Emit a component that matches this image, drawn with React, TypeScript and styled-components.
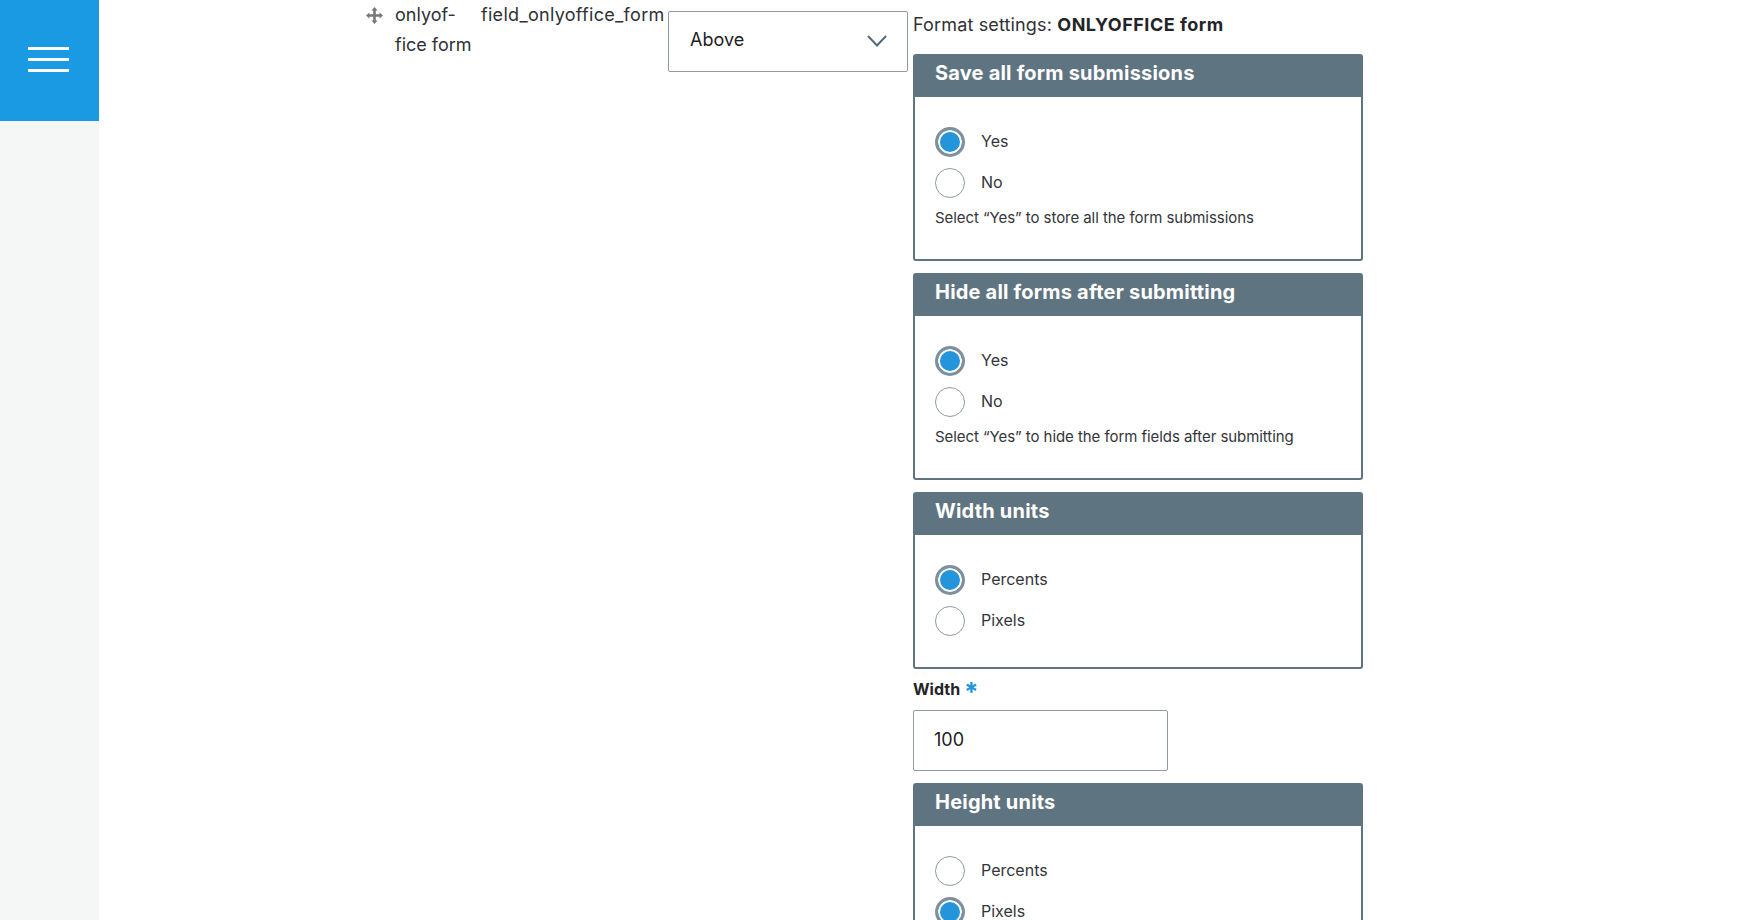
import React from "react";
import styled, { createGlobalStyle } from "styled-components";

const GlobalStyle = createGlobalStyle`
  html, body {
    margin: 0;
    height: 100%;
    overflow: hidden;
    background: #fff;
  }
  body {
    font-family: "Inter", "Liberation Sans", sans-serif;
    color: #232429;
  }
`;

const groups = [
  {
    title: "Save all form submissions",
    options: [
      { label: "Yes", checked: true },
      { label: "No", checked: false },
    ],
    hint: "Select “Yes” to store all the form submissions",
  },
  {
    title: "Hide all forms after submitting",
    options: [
      { label: "Yes", checked: true },
      { label: "No", checked: false },
    ],
    hint: "Select “Yes” to hide the form fields after submitting",
  },
  {
    title: "Width units",
    options: [
      { label: "Percents", checked: true },
      { label: "Pixels", checked: false },
    ],
  },
];

type Option = { label: string; checked: boolean };
type GroupProps = { title: string; options: Option[]; hint?: string };

const RadioGroup: React.FC<GroupProps> = ({ title, options, hint }) => (
  <Card>
    <CardHeader>{title}</CardHeader>
    <CardBody>
      {options.map(({ label, checked }) => (
        <RadioRow key={label}>
          <Radio $checked={checked} />
          <RadioLabel>{label}</RadioLabel>
        </RadioRow>
      ))}
      {hint && <Hint>{hint}</Hint>}
    </CardBody>
  </Card>
);

export default function App() {
  return (
    <>
      <GlobalStyle />
      <Page>
        <Sidebar>
          <MenuButton>
            <MenuBar />
            <MenuBar />
            <MenuBar />
          </MenuButton>
        </Sidebar>
        <Main>
          <DragCell>
            <svg width="17" height="17" viewBox="0 0 17 17" fill="#787878">
              <path d="M8.5 0 11.6 3.4H9.8v3.8h3.8V5.4L17 8.5l-3.4 3.1V9.8H9.8v3.8h1.8L8.5 17l-3.1-3.4h1.8V9.8H3.4v1.8L0 8.5l3.4-3.1v1.8h3.8V3.4H5.4z" />
            </svg>
          </DragCell>
          <NameCell>
            onlyof-
            <br />
            fice form
          </NameCell>
          <MachineCell>field_onlyoffice_form</MachineCell>
          <SelectBox>
            Above
            <svg width="20" height="12" viewBox="0 0 20 12" fill="none" stroke="#55697a" strokeWidth="2">
              <path d="M1 1l9 9.5L19 1" />
            </svg>
          </SelectBox>
          <Settings>
            <SettingsTitle>
              Format settings: <b>ONLYOFFICE form</b>
            </SettingsTitle>
            {groups.map((group) => (
              <RadioGroup key={group.title} {...group} />
            ))}
            <FieldLabel>
              Width <Required>*</Required>
            </FieldLabel>
            <NumberInput>100</NumberInput>
            <RadioGroup
              title="Height units"
              options={[
                { label: "Percents", checked: false },
                { label: "Pixels", checked: true },
              ]}
            />
          </Settings>
        </Main>
      </Page>
    </>
  );
}

const Page = styled.div`
  display: flex;
  height: 920px;
  overflow: hidden;
`;

const Sidebar = styled.aside`
  width: 99px;
  flex-shrink: 0;
  background: #f5f7f7;
`;

const MenuButton = styled.div`
  box-sizing: border-box;
  height: 121px;
  padding: 0 2px 2px 0;
  background: #1b9ae4;
  display: flex;
  flex-direction: column;
  justify-content: center;
  align-items: center;
  gap: 8px;
`;

const MenuBar = styled.span`
  width: 41px;
  height: 3px;
  background: #fff;
`;

const Main = styled.main`
  display: flex;
  align-items: flex-start;
  padding-left: 267px;
`;

const DragCell = styled.div`
  width: 29px;
  padding-top: 7px;
  flex-shrink: 0;
  svg {
    display: block;
  }
`;

const NameCell = styled.div`
  width: 86px;
  flex-shrink: 0;
  font-size: 18px;
  line-height: 30px;
  color: #2f3136;
`;

const MachineCell = styled.div`
  width: 187px;
  flex-shrink: 0;
  font-size: 18px;
  line-height: 30px;
  letter-spacing: 0.3px;
  color: #2f3136;
  white-space: nowrap;
`;

const SelectBox = styled.div`
  box-sizing: border-box;
  width: 240px;
  height: 61px;
  margin-top: 11px;
  flex-shrink: 0;
  padding: 0 20px 4px 21px;
  display: flex;
  align-items: center;
  justify-content: space-between;
  border: 1px solid #8e9ba5;
  border-radius: 2px;
  font-size: 18px;
  color: #1c1d22;
  svg {
    margin-top: 3px;
  }
`;

const Settings = styled.div`
  width: 450px;
  margin-left: 5px;
  flex-shrink: 0;
`;

const SettingsTitle = styled.div`
  height: 54px;
  padding-top: 11px;
  box-sizing: border-box;
  font-size: 18px;
  line-height: 28px;
  letter-spacing: 0.15px;
  color: #2f3136;
  b {
    font-weight: 700;
    letter-spacing: 0.5px;
    color: #232429;
  }
`;

const Card = styled.section`
  border: 2px solid #5f7481;
  border-radius: 3px;
  margin-bottom: 12px;
`;

const CardHeader = styled.h3`
  margin: 0;
  height: 41px;
  padding: 0 0 7px 20px;
  box-sizing: border-box;
  display: flex;
  align-items: center;
  background: #5f7481;
  color: #fff;
  font-size: 20px;
  font-weight: 700;
  letter-spacing: 0.2px;
`;

const CardBody = styled.div`
  padding: 30px 20px 31px;
  display: flex;
  flex-direction: column;
  gap: 11px;
`;

const RadioRow = styled.div`
  display: flex;
  align-items: center;
  gap: 16px;
`;

const Radio = styled.span<{ $checked: boolean }>`
  box-sizing: border-box;
  width: 30px;
  height: 30px;
  flex-shrink: 0;
  border-radius: 50%;
  border: ${({ $checked }) => ($checked ? "3px solid #7f909c" : "1px solid #8e9ba5")};
  background: ${({ $checked }) => ($checked ? "#2494db" : "#fff")};
  box-shadow: ${({ $checked }) => ($checked ? "inset 0 0 0 2px #fff" : "none")};
`;

const RadioLabel = styled.span`
  padding-bottom: 2px;
  font-size: 16px;
  color: #33353a;
`;

const Hint = styled.div`
  font-size: 15px;
  line-height: 20px;
  margin-top: -1px;
  letter-spacing: -0.06px;
  color: #33353a;
`;

const FieldLabel = styled.div`
  margin-top: -6px;
  height: 35px;
  font-size: 16px;
  font-weight: 700;
  line-height: 28px;
  color: #232429;
`;

const Required = styled.span`
  color: #2494db;
  font-size: 26px;
  line-height: 16px;
  vertical-align: -6px;
`;

const NumberInput = styled.div`
  box-sizing: border-box;
  width: 255px;
  height: 61px;
  margin-bottom: 12px;
  padding: 0 20px 2px;
  display: flex;
  align-items: center;
  border: 1px solid #8e9ba5;
  border-radius: 2px;
  font-size: 18px;
  color: #1c1d22;
`;
